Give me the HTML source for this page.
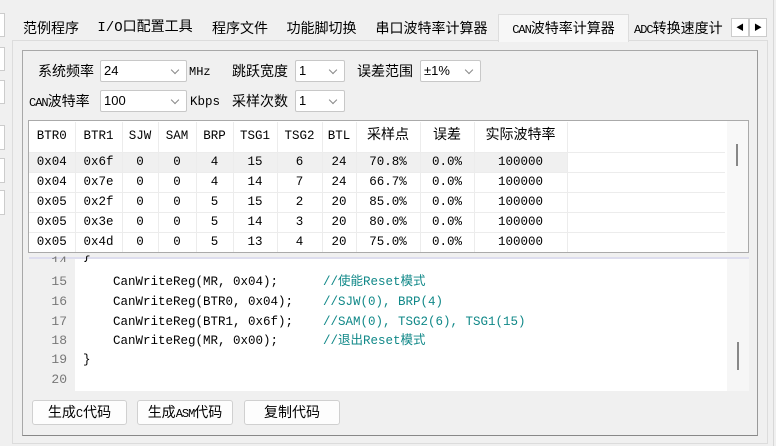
<!DOCTYPE html>
<html><head><meta charset="utf-8"><style>
*{margin:0;padding:0;box-sizing:border-box}
body{width:776px;height:446px;background:#f0f0f0;position:relative;overflow:hidden;font-family:"Liberation Sans","Noto Sans CJK SC",sans-serif;font-size:14px;color:#000}
.a{position:absolute}
.tab{position:absolute;top:16px;height:25px;line-height:25px;text-align:center;font-size:14px;white-space:nowrap;overflow:hidden}
.mono{font-family:"Liberation Mono","Noto Sans CJK SC",monospace}
.combo{position:absolute;background:#fff;border:1px solid #c8c8c8;border-radius:2px;height:22px;font-size:13px;line-height:20px;padding-left:3px}
.combo:after{content:"";position:absolute;right:8px;top:6px;width:5px;height:5px;border-right:1px solid #888;border-bottom:1px solid #888;transform:rotate(45deg)}
.lbl{position:absolute;font-size:14px;white-space:nowrap;line-height:20px;height:20px}
table{border-collapse:collapse;font-size:12.5px}
td{height:20px;text-align:center;border-right:1px solid #ececec;border-bottom:1px solid #ececec;padding:0;line-height:19px}
.btn{position:absolute;top:400px;height:25px;background:#fdfdfd;border:1px solid #d0d0d0;border-radius:3px;text-align:center;line-height:23px;font-size:14px}
.ln{position:absolute;left:29px;width:38px;text-align:right;font-size:13px;color:#777;line-height:16px;height:16px}
.cd{position:absolute;font-size:12.5px;white-space:pre;line-height:16px;height:16px}
.cm{color:#108888}
</style></head><body>
<div class="a" style="left:0;top:13px;width:5px;height:24px;background:#fff;border:1px solid #ccc;border-left:none"></div>
<div class="a" style="left:0;top:47px;width:5px;height:24px;background:#fff;border:1px solid #ccc;border-left:none"></div>
<div class="a" style="left:0;top:80px;width:5px;height:24px;background:#fff;border:1px solid #ccc;border-left:none"></div>
<div class="a" style="left:0;top:125px;width:5px;height:25px;background:#fff;border:1px solid #ccc;border-left:none"></div>
<div class="a" style="left:0;top:158px;width:5px;height:25px;background:#fff;border:1px solid #ccc;border-left:none"></div>
<div class="a" style="left:0;top:190px;width:5px;height:25px;background:#fff;border:1px solid #ccc;border-left:none"></div>
<div class="a" style="left:773px;top:0;width:1px;height:446px;background:#d8d8d8"></div>
<div class="a" style="left:12px;top:40px;width:756px;height:404px;background:#f0f0f0;border:1px solid #dcdcdc"></div>
<div class="tab" style="left:15px;width:72px">范例程序</div>
<div class="tab mono" style="left:90px;width:110px;font-size:14px">I/O口配置工具</div>
<div class="tab" style="left:203px;width:74px">程序文件</div>
<div class="tab" style="left:279px;width:85px">功能脚切换</div>
<div class="tab" style="left:366px;width:131px">串口波特率计算器</div>
<div class="tab" style="left:498px;width:131px;top:14px;height:28px;line-height:27px;background:#f7f7f7;border:1px solid #ddd;border-bottom:none"><span class="mono" style="font-size:12px;letter-spacing:-1px">CAN</span>波特率计算器</div>
<div class="tab" style="left:630px;width:100px;text-align:left;padding-left:4px"><span class="mono" style="font-size:12px;letter-spacing:-1px">ADC</span>转换速度计</div>
<div class="a" style="left:731px;top:18px;width:18px;height:19px;background:#fff;border:1px solid #ccc;font-size:8px;text-align:center;line-height:17px">◀</div>
<div class="a" style="left:749px;top:18px;width:18px;height:19px;background:#fff;border:1px solid #ccc;font-size:8px;text-align:center;line-height:17px">▶</div>
<div class="a" style="left:22px;top:50px;width:736px;height:386px;border:1px solid #a8a8a8;border-right-color:#999;border-bottom-color:#888"></div>
<div class="lbl" style="left:38px;top:61px">系统频率</div>
<div class="combo" style="left:100px;top:60px;width:87px">24</div>
<div class="lbl mono" style="left:189px;top:62px;font-size:12px">MHz</div>
<div class="lbl" style="left:232px;top:61px">跳跃宽度</div>
<div class="combo" style="left:295px;top:60px;width:50px">1</div>
<div class="lbl" style="left:357px;top:61px">误差范围</div>
<div class="combo" style="left:420px;top:60px;width:61px">±1%</div>
<div class="lbl" style="left:29px;top:91px"><span class="mono" style="font-size:12px;letter-spacing:-1px">CAN</span>波特率</div>
<div class="combo" style="left:100px;top:90px;width:87px">100</div>
<div class="lbl mono" style="left:190px;top:92px;font-size:12.5px">Kbps</div>
<div class="lbl" style="left:232px;top:91px">采样次数</div>
<div class="combo" style="left:295px;top:90px;width:50px">1</div>
<div class="a" style="left:28px;top:120px;width:721px;height:133px;background:#fff;border:1px solid #aaa;overflow:hidden">
<table class="mono" style="position:absolute;left:0;top:1px">
<tr style="height:30px"><td style="width:46px;height:30px">BTR0</td><td style="width:47px">BTR1</td><td style="width:36px">SJW</td><td style="width:38px">SAM</td><td style="width:37px">BRP</td><td style="width:44px">TSG1</td><td style="width:45px">TSG2</td><td style="width:34px">BTL</td><td style="width:64px;font-size:14px">采样点</td><td style="width:54px;font-size:14px">误差</td><td style="width:93px;font-size:14px">实际波特率</td><td style="width:158px;border-right:none"></td></tr>
<tr style="background:#f0f0f0"><td>0x04</td><td>0x6f</td><td>0</td><td>0</td><td>4</td><td>15</td><td>6</td><td>24</td><td>70.8%</td><td>0.0%</td><td>100000</td><td style="background:#fff;border-right:none"></td></tr>
<tr><td>0x04</td><td>0x7e</td><td>0</td><td>0</td><td>4</td><td>14</td><td>7</td><td>24</td><td>66.7%</td><td>0.0%</td><td>100000</td><td style="border-right:none"></td></tr>
<tr><td>0x05</td><td>0x2f</td><td>0</td><td>0</td><td>5</td><td>15</td><td>2</td><td>20</td><td>85.0%</td><td>0.0%</td><td>100000</td><td style="border-right:none"></td></tr>
<tr><td>0x05</td><td>0x3e</td><td>0</td><td>0</td><td>5</td><td>14</td><td>3</td><td>20</td><td>80.0%</td><td>0.0%</td><td>100000</td><td style="border-right:none"></td></tr>
<tr><td>0x05</td><td>0x4d</td><td>0</td><td>0</td><td>5</td><td>13</td><td>4</td><td>20</td><td>75.0%</td><td>0.0%</td><td>100000</td><td style="border-right:none"></td></tr>
</table>
<div class="a" style="left:698px;top:0;width:22px;height:132px;background:#f8f8f8"></div>
<div class="a" style="left:707px;top:23px;width:2px;height:22px;background:#888"></div>
</div>
<div class="a" style="left:29px;top:257px;width:720px;height:134px;background:#fff;border-top:2px solid #dde;overflow:hidden">
<div class="a" style="left:0;top:0;width:46px;height:134px;background:#f0f0f0"></div>
<div class="a" style="left:698px;top:0;width:22px;height:134px;background:#f6f6f6"></div>
<div class="a" style="left:708px;top:83px;width:2px;height:28px;background:#888"></div>
</div>
<div class="ln mono" style="top:254px;height:8px;overflow:hidden">14</div>
<div class="ln mono" style="top:274px">15</div>
<div class="ln mono" style="top:294px">16</div>
<div class="ln mono" style="top:314px">17</div>
<div class="ln mono" style="top:333px">18</div>
<div class="ln mono" style="top:352px">19</div>
<div class="ln mono" style="top:372px">20</div>
<div class="cd mono" style="left:83px;top:254px;height:8px;overflow:hidden">{</div>
<div class="cd mono" style="left:113px;top:274px">CanWriteReg(MR, 0x04);</div>
<div class="cd mono" style="left:113px;top:294px">CanWriteReg(BTR0, 0x04);</div>
<div class="cd mono" style="left:113px;top:314px">CanWriteReg(BTR1, 0x6f);</div>
<div class="cd mono" style="left:113px;top:333px">CanWriteReg(MR, 0x00);</div>
<div class="cd mono" style="left:83px;top:352px">}</div>
<div class="cd mono cm" style="left:323px;top:274px">//使能Reset模式</div>
<div class="cd mono cm" style="left:323px;top:294px">//SJW(0), BRP(4)</div>
<div class="cd mono cm" style="left:323px;top:314px">//SAM(0), TSG2(6), TSG1(15)</div>
<div class="cd mono cm" style="left:323px;top:333px">//退出Reset模式</div>
<div class="btn" style="left:32px;width:95px">生成<span class="mono" style="font-size:12px">C</span>代码</div>
<div class="btn" style="left:137px;width:96px">生成<span class="mono" style="font-size:12px;letter-spacing:-1px">ASM</span>代码</div>
<div class="btn" style="left:244px;width:96px">复制代码</div>
</body></html>
